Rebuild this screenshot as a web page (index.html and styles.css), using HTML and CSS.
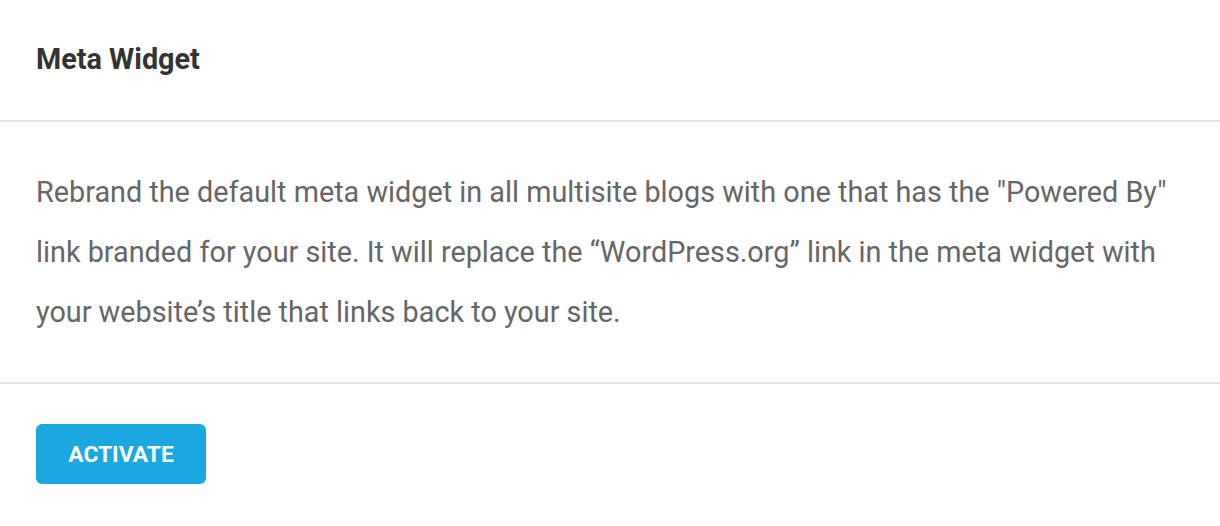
FILE: index.html
```html
<!DOCTYPE html>
<html>
<head>
<meta charset="utf-8">
<link rel="stylesheet" href="styles.css">
</head>
<body>
<div class="card">
  <div class="card-header"><h2 class="title">Meta Widget</h2></div>
  <div class="card-body">
    <p class="desc">Rebrand the default meta widget in all multisite blogs with one that has the "Powered By" link branded for your site. It will replace the “WordPress.org” link in the meta widget with your website’s title that links back to your site.</p>
  </div>
  <div class="card-footer"><button class="btn">ACTIVATE</button></div>
</div>
</body>
</html>
```
FILE: styles.css
```css
html, body { margin: 0; padding: 0; background: #fff; }
body { font-family: Roboto, "Noto Sans", sans-serif; }
.card { width: 1220px; }
.card-header {
  display: flex;
  align-items: center;
  padding: 0 36px;
  border-bottom: 2px solid #e6e6e6;
  box-sizing: border-box;
  height: 122px;
}
.title {
  margin: 0;
  font-size: 28.8px;
  font-weight: 700;
  color: #333;
  line-height: 1;
  margin-top: -1px;
}
.card-body {
  padding: 40px 36px 40px 36px;
  border-bottom: 2px solid #e6e6e6;
}
.desc {
  margin: 0;
  font-size: 28.8px;
  line-height: 60px;
  color: #666;
}
.card-footer { padding: 40px 36px; }
.btn {
  display: block;
  width: 170px;
  height: 60px;
  border: 0;
  border-radius: 6px;
  background: #1ba8e1;
  color: #fff;
  font-family: Roboto, sans-serif;
  font-weight: 700;
  font-size: 22.8px;
  padding: 0;
}
```
